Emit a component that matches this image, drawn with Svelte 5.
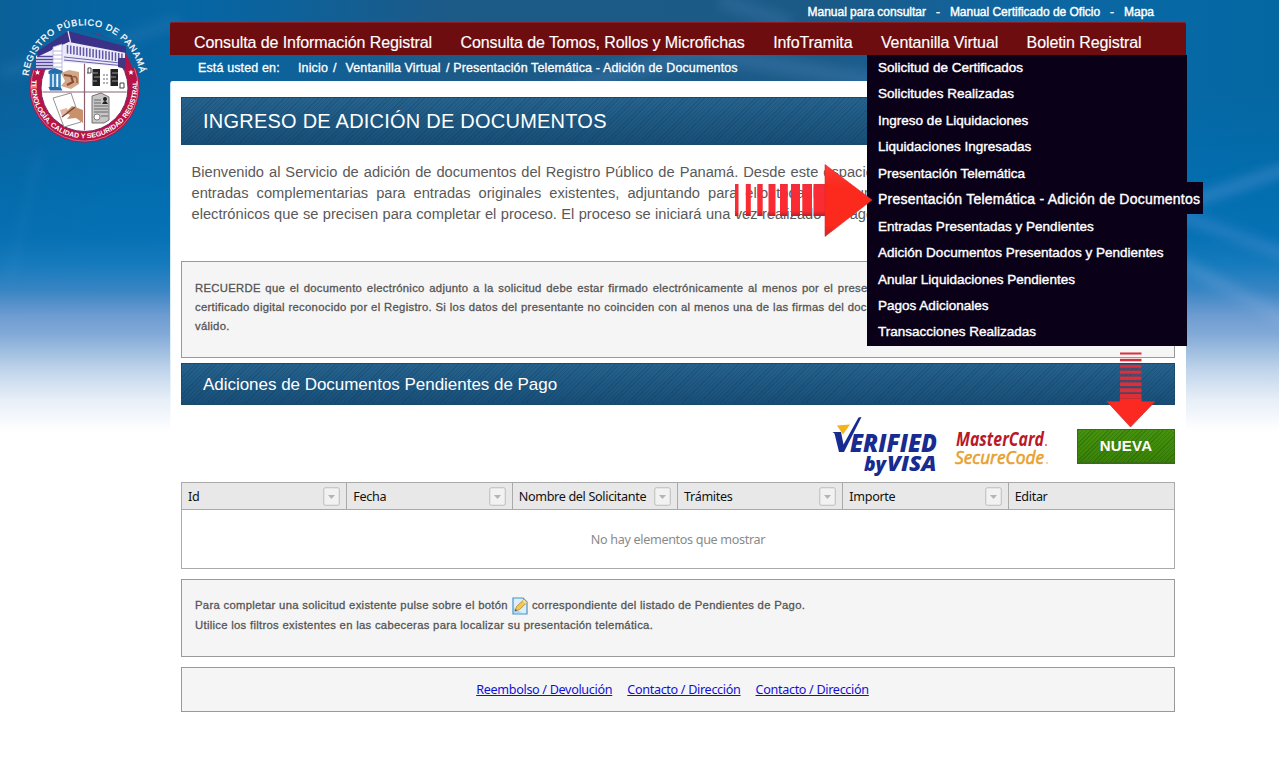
<script>
  const topLinks = ['Manual para consultar', 'Manual Certificado de Oficio', 'Mapa'];
  const nav = [
    'Consulta de Información Registral',
    'Consulta de Tomos, Rollos y Microfichas',
    'InfoTramita',
    'Ventanilla Virtual',
    'Boletin Registral'
  ];
  const menu = [
    'Solicitud de Certificados',
    'Solicitudes Realizadas',
    'Ingreso de Liquidaciones',
    'Liquidaciones Ingresadas',
    'Presentación Telemática',
    'Presentación Telemática - Adición de Documentos',
    'Entradas Presentadas y Pendientes',
    'Adición Documentos Presentados y Pendientes',
    'Anular Liquidaciones Pendientes',
    'Pagos Adicionales',
    'Transacciones Realizadas'
  ];
  const columns = ['Id', 'Fecha', 'Nombre del Solicitante', 'Trámites', 'Importe', 'Editar'];
  const footer = ['Reembolso / Devolución', 'Contacto / Dirección', 'Contacto / Dirección'];
  const tailStripes = [
    [735, 3.5], [745.8, 5], [757.3, 5.4], [768.5, 7], [780, 7.8], [791, 9], [802.3, 9.7], [813.5, 12]
  ];
  const downStripes = [
    [352.5, 2], [358.8, 2.5], [365, 2.8], [370.7, 3], [376.6, 3.3], [382.4, 3.6], [388.3, 4], [394, 4.5]
  ];
  const windows = Array.from({ length: 18 }, (_, i) => i);
</script>

<div class="page">
  <svg class="sky" width="1279" height="440" viewBox="0 0 1279 440" aria-hidden="true">
    <defs>
      <linearGradient id="skyBase" x1="0" x2="1" y1="0" y2="0">
        <stop offset="0" stop-color="#0b6099" />
        <stop offset=".08" stop-color="#0565a2" />
        <stop offset=".15" stop-color="#0566a4" />
        <stop offset=".35" stop-color="#1c5a88" />
        <stop offset=".65" stop-color="#1b5a87" />
        <stop offset=".78" stop-color="#10659f" />
        <stop offset=".92" stop-color="#0668a4" />
        <stop offset="1" stop-color="#0567a2" />
      </linearGradient>
      <linearGradient id="skyDeep" x1="0" x2="0" y1="0" y2="1">
        <stop offset=".2" stop-color="#0070b6" stop-opacity="0" />
        <stop offset=".42" stop-color="#0072b6" stop-opacity=".6" />
        <stop offset=".6" stop-color="#0a76bd" stop-opacity=".85" />
        <stop offset=".72" stop-color="#3f7cc2" />
      </linearGradient>
      <linearGradient id="skyFade" x1="0" x2="0" y1="0" y2="1">
        <stop offset=".54" stop-color="#fff" stop-opacity="0" />
        <stop offset=".66" stop-color="#fff" stop-opacity=".1" />
        <stop offset=".76" stop-color="#fff" stop-opacity=".35" />
        <stop offset=".84" stop-color="#fff" stop-opacity=".67" />
        <stop offset=".91" stop-color="#fff" stop-opacity=".88" />
        <stop offset=".98" stop-color="#fff" />
      </linearGradient>
      <filter id="soft" x="-20%" y="-20%" width="140%" height="140%"><feGaussianBlur stdDeviation="6" /></filter>
      <filter id="softer" x="-20%" y="-60%" width="140%" height="220%"><feGaussianBlur stdDeviation="7" /></filter>
    </defs>
    <rect width="1279" height="440" fill="url(#skyBase)" />
    <rect width="1279" height="440" fill="url(#skyDeep)" />
    <path d="M0 72 Q70 60 180 20" stroke="#3f86bb" stroke-width="10" opacity=".3" filter="url(#soft)" fill="none" />
    <path d="M40 150 L10 280" stroke="#4a93c8" stroke-width="6" opacity=".15" filter="url(#soft)" fill="none" />
    <path d="M560 90 L700 52 L880 82" stroke="#4c82b6" stroke-width="14" opacity=".45" filter="url(#softer)" fill="none" />
    <path d="M720 0 L790 24" stroke="#4c82b6" stroke-width="14" opacity=".3" filter="url(#soft)" fill="none" />
    <path d="M1180 205 L1290 168" stroke="#4f8fd0" stroke-width="11" opacity=".55" filter="url(#soft)" fill="none" />
    <path d="M1180 215 L1290 256" stroke="#4f8fd0" stroke-width="11" opacity=".45" filter="url(#soft)" fill="none" />
    <path d="M1180 262 L1290 322" stroke="#6a9fd8" stroke-width="12" opacity=".35" filter="url(#soft)" fill="none" />
    <rect width="1279" height="440" fill="url(#skyFade)" />
  </svg>

  <svg class="seal" width="132" height="130" viewBox="18 16 132 130" role="img" aria-label="Registro Público de Panamá">
    <defs>
      <path id="arcTop" d="M28.500 76 A56 56 0 0 1 140 76" />
      <path id="arcBottom" d="M32 78 A53 53 0 1 0 137 78" />
      <clipPath id="sealInner"><circle cx="84.5" cy="88" r="42.5" /></clipPath>
    </defs>
    <circle cx="84.5" cy="87.5" r="55" fill="#b51446" />
    <circle cx="84.5" cy="87.5" r="53.6" fill="none" stroke="#e3a3b8" stroke-width=".6" />
    <circle cx="84.5" cy="88" r="43.5" fill="#fff" stroke="#7b2a62" stroke-width="1" />
    <path d="M20 70 L34 44 L68 27 L126 42 L150 70 L133 68 L125 58 L125 66 L36 70Z" fill="#0d639e" />
    <path d="M125 52 L125 74 L132 74 Q132 62 125 52Z" fill="#b51446" />
    <g clip-path="url(#sealInner)">
      <path d="M62 62H125V90H62Z" fill="#fff" />
      <path d="M84.5 60V132M40 92H129" stroke="#8c6072" stroke-width="1.2" />
    </g>
    <path d="M36 56 L68 33 L125 48 V67 L62 62 V69 H36Z" fill="#eceafa" />
    <path d="M38 51 L68 31 L126 46.500 V53 L69 42 L37 57Z" fill="#3b3187" />
    <path d="M68 31 L70.500 42 L52 50" stroke="#e9e8f8" stroke-width="1.2" fill="none" />
    {#each windows as i}
      <path d="M{67.5 + i * 3.2} {45 + i * 0.5}v8.500" stroke="#5f57a6" stroke-width="1.500" />
    {/each}
    <path d="M64 57 L125 63.500 M64 60 L125 66" stroke="#6a62ab" stroke-width="1.1" />
    <path d="M118 58h7.500v11l-7.500-2z" fill="#423782" />
    <path d="M37 56.500H53M36 59.500H53M36 62.500H53M36 65.500H53M36 68.500H53" stroke="#51479c" stroke-width="1.600" />
    <path d="M53 47 L62 44 V72 L53 69Z" fill="#fff" stroke="#aaa5d3" stroke-width=".7" />
    <path d="M53 51h9M53 55h9M53 59h9M53 63h9M53 67h9" stroke="#a8a3d2" stroke-width=".8" />
    <path d="M48.500 71l6-3 8 3v3H48.500zM48.500 87h12l2 3.500H50z" fill="#246da8" />
    <path d="M51 73v14M55 73v14M59.500 73v15" stroke="#3581bd" stroke-width="2.600" />
    <path d="M61 73l8-3 10 2v12l-8 5-10-3 4-5z" fill="#d3a78a" />
    <path d="M64 75l7 1 2 6-6 3" stroke="#8b4a36" stroke-width="2.200" fill="none" />
    <path d="M72 77q6-2 5 6" stroke="#9b5f44" stroke-width="1.600" fill="none" />
    <path d="M53 98l18-5 10 29-17 5z" fill="#fff" stroke="#888" stroke-width=".9" />
    <path d="M60 110l7-2 2 6-7 2z" fill="#e6b5a0" />
    <path d="M66 112l6-6 11 4v13l-7-5-9 1 3-4z" fill="#c9906c" />
    <path d="M62 117l13-10" stroke="#6b4131" stroke-width="1.2" />
    <path d="M92.500 69h7.500v17h-7.500zM110.500 69h7.500v17h-7.500z" fill="#222" />
    <path d="M93 73h5M94 77h6M93 81h4M112 73h6M111 77h5M112 81h6" stroke="#999" stroke-width="1" />
    <path d="M87 73h4v-5h-3v5M119.500 88h4.500v-5h-4v5" stroke="#444" stroke-width="1" fill="none" />
    <path d="M104 74v10M107 74v10" stroke="#666" stroke-width="1" stroke-dasharray="2 2" />
    <path d="M92 96l9-3 8 4v23l-5 3H92z" fill="#c6c6c6" stroke="#666" stroke-width=".9" />
    <path d="M94 100h7M94 103h7M94 106h14M94 109h14M94 112h14M101 116h7" stroke="#666" stroke-width="1" />
    <circle cx="105" cy="99" r="2" fill="#222" /><path d="M102 104q3-6 6 0z" fill="#222" />
    <circle cx="97" cy="117" r="3" fill="#fff" stroke="#555" stroke-width=".7" />
    <text class="seal-top"><textPath href="#arcTop" textLength="162" startOffset="0">REGISTRO PÚBLICO DE PANAMÁ</textPath></text>
    <text class="seal-bottom"><textPath href="#arcBottom" textLength="176" startOffset="2">TECNOLOGÍA, CALIDAD Y SEGURIDAD REGISTRAL</textPath></text>
    <path d="M37.500 69.500l.8 1.900 2 .1-1.600 1.300.6 2-1.800-1.100-1.800 1.100.6-2-1.600-1.300 2-.1zM131 69.500l.8 1.900 2 .1-1.600 1.300.6 2-1.800-1.100-1.800 1.100.6-2-1.600-1.300 2-.1z" fill="#fff" />
  </svg>

  <div class="site">
    <div class="top-links">
      {#each topLinks as link, i}
        {#if i}<span>-</span>{/if}<a href="#top">{link}</a>
      {/each}
    </div>

    <nav>
      {#each nav as item}<a href="#nav">{item}</a>{/each}
      <ul class="menu">
        {#each menu as item, i}
          <li class:current={i === 5}>{item}</li>
        {/each}
      </ul>
    </nav>

    <div class="crumbs">
      <span class="c1">Está usted en:</span><span class="c2">Inicio</span><span class="c3">/</span><span class="c4">Ventanilla Virtual</span><span class="c5">/ Presentación Telemática - Adición de Documentos</span>
    </div>

    <main>
      <h1 class="band">INGRESO DE ADICIÓN DE DOCUMENTOS</h1>
      <div class="intro">
        <p class="l1">Bienvenido al Servicio de adición de documentos del Registro Público de Panamá. Desde este espacio</p>
        <p class="l2">entradas complementarias para entradas originales existentes, adjuntando para ello toda la docum</p>
        <p class="l3">electrónicos que se precisen para completar el proceso. El proceso se iniciará una vez realizado el pago</p>
      </div>
      <section class="note reminder">
        <p class="r1">RECUERDE que el documento electrónico adjunto a la solicitud debe estar firmado electrónicamente al menos por el prese</p>
        <p class="r2">certificado digital reconocido por el Registro. Si los datos del presentante no coinciden con al menos una de las firmas del docu</p>
        <p>válido.</p>
      </section>
      <h2 class="band">Adiciones de Documentos Pendientes de Pago</h2>

      <div class="pay">
        <svg width="108" height="62" viewBox="832 416 108 62" role="img" aria-label="Verified by Visa">
          <path d="M838 425.500l13-1-7 10z" fill="#f5b21c" />
          <path d="M833.5 432h8.500l2.500 12.500 15-27 3-.5-17.500 35h-5l-4.500-18.500z" fill="#172b90" />
          <text class="visa" x="851" y="451.500" font-size="24" textLength="87" lengthAdjust="spacingAndGlyphs">ERIFIED</text>
          <text class="visa" x="865" y="470.500" font-size="19" textLength="22" lengthAdjust="spacingAndGlyphs">by</text>
          <text class="visa" x="888" y="470.500" font-size="20.500" textLength="49.500" lengthAdjust="spacingAndGlyphs">VISA</text>
        </svg>
        <svg class="mc" width="96" height="42" viewBox="954 427 96 42" role="img" aria-label="MasterCard SecureCode">
          <text class="master" x="957" y="445.500" font-size="19.500" fill="#b91828" font-weight="700" textLength="88" lengthAdjust="spacingAndGlyphs">MasterCard</text>
          <text class="master" x="956" y="463.800" font-size="18.500" fill="#e8a02c" stroke="#e8a02c" stroke-width=".6" font-weight="400" textLength="89" lengthAdjust="spacingAndGlyphs">SecureCode</text>
          <circle cx="1047" cy="445" r="1" fill="#d05a62" /><circle cx="1048" cy="463" r=".8" fill="#e8a02c" />
        </svg>
        <button>NUEVA</button>
      </div>

      <div class="table">
        <div class="head">
          {#each columns as column, i}
            <div class="cell">
              <span>{column}</span>
              {#if i < 5}
                <svg class="filter" width="17" height="19" viewBox="0 0 17 19" aria-hidden="true">
                  <rect x=".75" y=".75" width="15.500" height="17.500" rx="1.500" fill="#f2f2f2" stroke="#bcbcbc" />
                  <path d="M5 8h7l-3.500 4z" fill="#b4b4b4" />
                </svg>
              {/if}
            </div>
          {/each}
        </div>
        <div class="empty">No hay elementos que mostrar</div>
      </div>

      <section class="note help">
        <p class="with-icon">
          <span>Para completar una solicitud existente pulse sobre el botón</span>
          <svg width="16" height="18" viewBox="0 0 16 18" aria-hidden="true">
            <path d="M1 1h10l4 4v12H1z" fill="#d9effb" stroke="#4c91c7" stroke-width="1.200" />
            <path d="M2 16v-5l8 5z" fill="#a8d8f3" />
            <path d="M3 14l1.500-4.500 7.500-7 3 3-7.500 7z" fill="#f3c64d" stroke="#b48835" stroke-width=".8" />
            <path d="M12 2.500l3 3-1.500 1.300-3-3z" fill="#f7dfa8" />
            <path d="M3 14l.6-2 1.500 1.500z" fill="#444" />
          </svg>
          <span>correspondiente del listado de Pendientes de Pago.</span>
        </p>
        <p>Utilice los filtros existentes en las cabeceras para localizar su presentación telemática.</p>
      </section>

      <footer>
        {#each footer as item}<a href="#footer">{item}</a>{/each}
      </footer>
    </main>
  </div>

  <svg class="arrow-right" width="142" height="76" viewBox="732 162 142 76" aria-hidden="true">
    <defs>
      <linearGradient id="redHead" x1="0" y1="0" x2="0" y2="1">
        <stop offset="0" stop-color="#ff3b3b" /><stop offset=".3" stop-color="#fb2a1c" /><stop offset=".85" stop-color="#fb2a1c" /><stop offset="1" stop-color="#c9242c" />
      </linearGradient>
      <linearGradient id="redTail" x1="0" y1="0" x2="0" y2="1">
        <stop offset="0" stop-color="#e8303a" /><stop offset=".15" stop-color="#fb2b38" /><stop offset=".85" stop-color="#fb2b30" /><stop offset="1" stop-color="#b8202a" />
      </linearGradient>
    </defs>
    {#each tailStripes as [x, w]}
      <rect {x} y="184" width={w} height="32" fill="url(#redTail)" />
    {/each}
    <path d="M825 164.500L872 200L825 236.500Z" fill="url(#redHead)" stroke="#d82a2c" stroke-width=".6" />
  </svg>

  <svg class="arrow-down" width="52" height="78" viewBox="1105 350 52 78" aria-hidden="true">
    <rect x="1120" y="364" width="21.500" height="36" fill="#7a3a50" opacity=".45" />
    {#each downStripes as [y, h]}
      <rect x="1120" {y} width="21.500" height={h} fill="#dd2f38" />
    {/each}
    <path d="M1120 398.500h21.500v3h13.500L1130.500 427L1107 401.500h13z" fill="#fb2922" stroke="#c52d31" stroke-width=".7" />
  </svg>
</div>

<style>
  :global(body) { margin: 0; background: #fff; }
  .page { position: relative; width: 1279px; height: 762px; overflow: hidden; background: #fff; font-family: "Liberation Sans", Arial, sans-serif; }
  .sky { position: absolute; left: 0; top: 0; }
  .seal { position: absolute; left: 18px; top: 16px; }
  .seal text { font-weight: 700; fill: #fff; }
  .seal .seal-top { font-size: 9px; font-weight: 400; stroke: #fff; stroke-width: .25px; }
  .seal .seal-bottom { font-size: 7px; }
  .site { position: relative; width: 1016px; margin-left: 170px; }
  a { color: inherit; text-decoration: none; }
  p, h1, h2, ul { margin: 0; padding: 0; font-weight: 400; }

  .top-links { height: 22px; box-sizing: border-box; padding: 5px 32px 0 0; display: flex; justify-content: flex-end; gap: 10px; font-size: 12px; line-height: 15px; color: #fff; -webkit-text-stroke: .4px #fff; letter-spacing: -.02px; }
  nav { position: relative; height: 33px; box-sizing: border-box; background: #6d0d10; border-top: 1px solid #85202a; border-radius: 2px 2px 0 0; display: flex; gap: 28.4px; padding: 0 24px; font-size: 16px; line-height: 39px; color: #fff; white-space: nowrap; letter-spacing: -.09px; -webkit-text-stroke: .15px #fff; }
  .menu { position: absolute; z-index: 2; left: 697px; top: 32px; width: 320px; height: 291px; box-sizing: border-box; background: #0a0018; list-style: none; font-size: 13.5px; letter-spacing: .01px; -webkit-text-stroke: .4px #fff; }
  .menu li { height: 26.450px; line-height: 26.5px; padding-left: 11px; box-sizing: border-box; }
  .menu .current { position: relative; width: 336px; height: 32px; margin: -5px 0 -.5px; line-height: 35.5px; background: #0a0018; font-size: 14px; letter-spacing: .22px; }
  .crumbs { height: 26px; padding-left: 28px; display: flex; font-size: 12.5px; letter-spacing: .13px; line-height: 26px; color: #fff; white-space: pre; -webkit-text-stroke: .3px #fff; }
  .c1 { width: 100px; } .c2 { width: 35px; } .c3 { width: 12.500px; } .c4 { width: 100.500px; }

  main { height: 681px; box-sizing: border-box; background: linear-gradient(#bfe0f6, #e6f3fc 300px, #fff 345px) 0 0 / 1px 100% no-repeat #fff; border-radius: 3px 3px 0 0; padding: 16px 11px 0 11px; }
  .band { box-sizing: border-box; border: 1px solid #1c4a6b; border-width: 1px 1px 2px; color: #fff; padding-left: 21px; background: repeating-linear-gradient(135deg, rgba(8, 50, 85, .22) 0 1px, transparent 1px 3px), linear-gradient(#26638d, #184f78); }
  h1.band { height: 48px; line-height: 46px; font-size: 20px; letter-spacing: .23px; }
  h2.band { height: 42px; line-height: 42px; font-size: 17px; letter-spacing: -.03px; margin-top: 5px; }
  .intro { height: 116px; box-sizing: border-box; padding: 16.6px 0 0 10.500px; font-size: 14.67px; line-height: 21.300px; color: #595959; white-space: nowrap; }
  .intro p { width: 676px; }
  .l1 { word-spacing: .9px; } .l2 { word-spacing: 3.95px; } .l3 { word-spacing: .3px; }
  .note { box-sizing: border-box; border: 1px solid #999; background: #f5f5f5; color: #555; font-size: 11.3px; letter-spacing: .29px; line-height: 19.200px; white-space: nowrap; padding: 16.4px 0 0 13px; -webkit-text-stroke: .3px #555; }
  .note p { height: 19.200px; }
  .reminder { height: 97px; padding-top: 17px; }
  .reminder p { width: 672px; }
  .r1 { word-spacing: 1.2px; } .r2 { word-spacing: .2px; }
  .pay { height: 77px; display: flex; justify-content: flex-end; align-items: flex-start; box-sizing: border-box; padding-top: 11px; }
  .pay svg { overflow: visible; }
  .pay .mc { margin: 11px 28px 0 14px; }
  .visa { font-family: "Open Sans", sans-serif; font-weight: 800; font-style: italic; fill: #172b90; }
  .master { font-family: "Open Sans", sans-serif; font-style: italic; }
  button { margin: 13px 0 0; width: 98px; height: 35px; border: 1px solid #376d14; border-bottom-width: 2px; color: #fff; background: repeating-linear-gradient(135deg, rgba(15, 70, 0, .25) 0 1px, transparent 1px 3px), linear-gradient(#46930f, #3b8208); font: 700 15px "Liberation Sans", sans-serif; letter-spacing: .2px; padding: 0 0 1px; }
  .table { border: 1px solid #aaa; height: 87px; box-sizing: border-box; font-family: "Noto Sans", sans-serif; font-size: 12.6px; letter-spacing: -.33px; }
  .head { height: 27px; box-sizing: border-box; display: grid; grid-template-columns: repeat(6, 1fr); background: #e8e8e8; border-bottom: 1px solid #aaa; color: #111; }
  .cell { display: flex; align-items: center; justify-content: space-between; padding: 0 6px; border-right: 1px solid #aaa; white-space: nowrap; }
  .cell:last-child { border-right: 0; }
  .empty { height: 58px; line-height: 59px; text-align: center; color: #8a8a8a; }
  .help { height: 78px; margin-top: 10px; }
  .with-icon { display: flex; gap: 4px; align-items: center; }
  footer { margin-top: 10px; height: 45px; box-sizing: border-box; border: 1px solid #999; background: #f5f5f5; display: flex; justify-content: center; gap: 15px; padding-right: 11px; font: 12.6px/44px "Noto Sans", sans-serif; letter-spacing: -.32px; color: #1010d8; }
  footer a { text-decoration: underline; }
  .arrow-right { position: absolute; left: 732px; top: 162px; z-index: 3; }
  .arrow-down { position: absolute; left: 1105px; top: 350px; z-index: 3; }
</style>
